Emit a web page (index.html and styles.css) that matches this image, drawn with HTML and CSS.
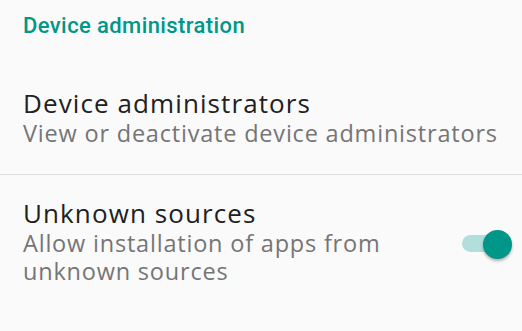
FILE: index.html
```html
<!DOCTYPE html>
<html>
<head>
    <title>Security</title>
    <link rel="stylesheet" href="styles.css">
</head>
<body>
    <div class="category">Device administration</div>

    <div class="pref">
        <div class="pref-text">
            <div class="pref-title">Device administrators</div>
            <div class="pref-summary">View or deactivate device administrators</div>
        </div>
    </div>

    <div class="divider"></div>

    <div class="pref">
        <div class="pref-text">
            <div class="pref-title">Unknown sources</div>
            <div class="pref-summary">Allow installation of apps from unknown sources</div>
        </div>
        <div class="switch on">
            <div class="switch-track"></div>
            <div class="switch-thumb"></div>
        </div>
    </div>
</body>
</html>
```

FILE: styles.css
```css
body {
    background: #fafafa;
    margin: 0;
    font-family: "Open Sans", sans-serif;
}

.category {
    font-family: Roboto, sans-serif;
    font-weight: 500;
    font-size: 22px;
    letter-spacing: 0.4px;
    color: #009688;
    padding: 11px 23px 0;
    line-height: 30px;
    margin-bottom: 46px;
}

.pref {
    display: flex;
    align-items: center;
    padding: 0 10px 0 23px;
}

.pref-text {
    flex: 1;
}

.pref-title {
    font-size: 26px;
    letter-spacing: 1.1px;
    line-height: 32px;
    color: #212121;
}

.pref-summary {
    font-size: 23.5px;
    letter-spacing: 0.8px;
    line-height: 28px;
    color: #757575;
}

.divider {
    height: 1px;
    background: #dddddd;
    margin: 27px 0 22px;
}

.switch {
    position: relative;
    width: 50px;
    height: 30px;
    margin: 7px 0 0 40px;
    flex-shrink: 0;
}

.switch-track {
    position: absolute;
    left: 0;
    top: 5px;
    width: 40px;
    height: 17px;
    border-radius: 9px;
    background: #b2dfdb;
}

.switch-thumb {
    position: absolute;
    left: 21px;
    top: 0;
    width: 29px;
    height: 29px;
    border-radius: 50%;
    background: #009688;
    box-shadow: 0 2px 3px rgba(0, 0, 0, 0.3);
}
```
